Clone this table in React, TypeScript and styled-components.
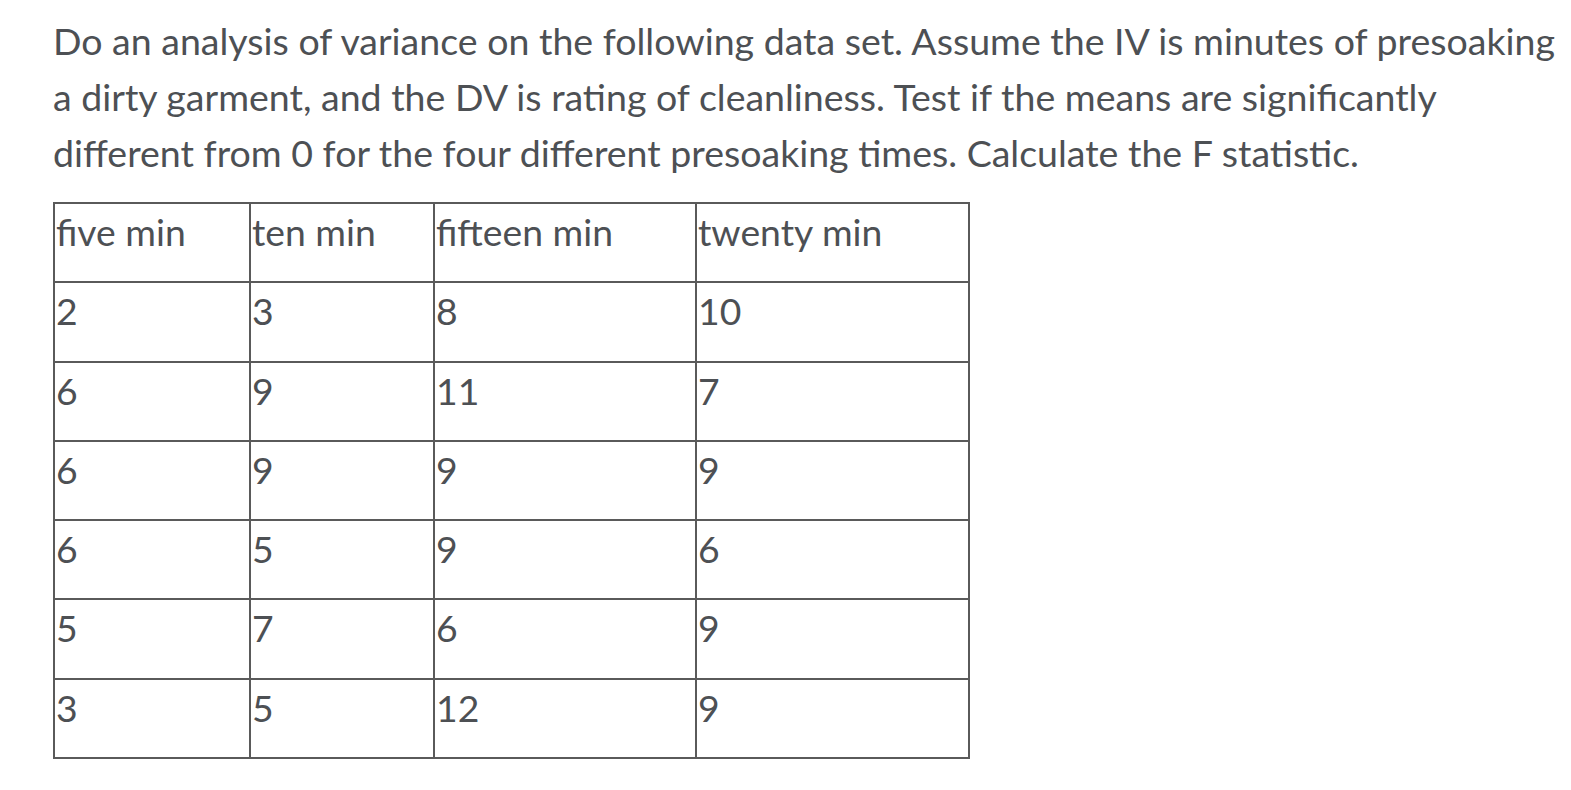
import styled, { createGlobalStyle } from "styled-components";

const GlobalStyle = createGlobalStyle`
  html, body {
    margin: 0;
    padding: 0;
    background: #ffffff;
  }
`;

const Page = styled.div`
  padding: 13px 0 0 53px;
  width: 1502px;
  font-family: Lato, "Open Sans", sans-serif;
  color: #4d5054;
`;

const Question = styled.p`
  margin: 0 0 21px;
  font-size: 37.5px;
  line-height: 56px;
`;

const DataTable = styled.table`
  border-collapse: collapse;
  border: 2px solid #5a5a5a;
  font-size: 37.3px;
  line-height: 56px;
`;

const Cell = styled.td<{ $w: number }>`
  width: ${(p) => p.$w}px;
  height: 79.3px;
  box-sizing: border-box;
  border: 2px solid #5a5a5a;
  padding: 0 2px 21px 1px;
  vertical-align: top;
  text-align: left;
`;

const widths = [196, 184, 262, 273];
const headers = ["five min", "ten min", "fifteen min", "twenty min"];
const rows = [
  ["2", "3", "8", "10"],
  ["6", "9", "11", "7"],
  ["6", "9", "9", "9"],
  ["6", "5", "9", "6"],
  ["5", "7", "6", "9"],
  ["3", "5", "12", "9"],
];

export default function App() {
  return (
    <>
      <GlobalStyle />
      <Page>
        <Question>
          Do an analysis of variance on the following data set. Assume the IV is minutes of presoaking a dirty
          garment, and the DV is rating of cleanliness. Test if the means are significantly different from 0 for
          the four different presoaking times. Calculate the F statistic.
        </Question>
        <DataTable>
          <tbody>
            <tr>
              {headers.map((h, i) => (
                <Cell key={h} $w={widths[i]}>
                  {h}
                </Cell>
              ))}
            </tr>
            {rows.map((r, ri) => (
              <tr key={ri}>
                {r.map((v, ci) => (
                  <Cell key={ci} $w={widths[ci]}>
                    {v}
                  </Cell>
                ))}
              </tr>
            ))}
          </tbody>
        </DataTable>
      </Page>
    </>
  );
}
